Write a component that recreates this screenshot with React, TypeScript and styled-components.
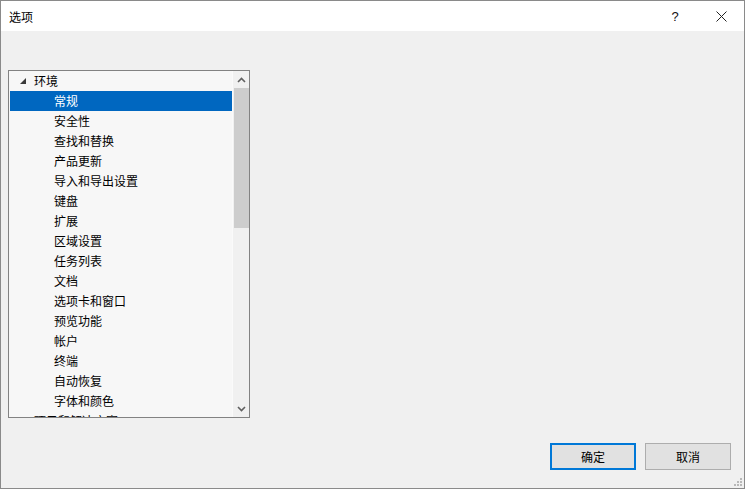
import React from "react";
import styled, { createGlobalStyle } from "styled-components";

const Global = createGlobalStyle`
  html, body { margin: 0; padding: 0; }
  body {
    font-family: "Noto Sans CJK SC", "Microsoft YaHei", sans-serif;
    font-size: 12px;
    background: #ffffff;
  }
  * { box-sizing: border-box; }
`;

const Window = styled.div`
  width: 745px;
  height: 489px;
  border: 1px solid #8a8a8a;
  display: flex;
  flex-direction: column;
  background: #f0f0f0;
  color: #000;
`;

const TitleBar = styled.div`
  height: 30px;
  background: #ffffff;
  display: flex;
  align-items: center;
  padding-left: 8px;
  flex: none;
`;

const Title = styled.div`
  flex: 1;
  font-size: 12px;
  line-height: 14px;
  margin-top: 1px;
`;

const CaptionButton = styled.div`
  width: 46px;
  height: 30px;
  display: flex;
  align-items: center;
  justify-content: center;
  color: #111;
  font-family: "Liberation Sans", Arial, sans-serif;
  font-size: 13px;
`;

const Body = styled.div`
  flex: 1;
  display: flex;
  flex-direction: column;
  padding: 39px 13px 18px 7px;
`;

const Tree = styled.div`
  width: 242px;
  height: 348px;
  border: 1px solid #828282;
  background: #f7f7f7;
  display: flex;
  overflow: hidden;
`;

const List = styled.div`
  flex: 1;
  overflow: hidden;
  padding-left: 1px;
`;

const Row = styled.div<{ $selected?: boolean; $level: number }>`
  height: 20px;
  display: flex;
  align-items: center;
  padding-left: ${(p) => (p.$level === 0 ? 10 : 44)}px;
  background: ${(p) => (p.$selected ? "#0067c0" : "transparent")};
  color: ${(p) => (p.$selected ? "#ffffff" : "#000000")};
  white-space: nowrap;
  line-height: 14px;
`;

const Toggle = styled.span`
  width: 8px;
  height: 20px;
  display: inline-flex;
  align-items: center;
  justify-content: flex-start;
  margin-right: 6px;
`;

const ScrollBar = styled.div`
  width: 17px;
  flex: none;
  background: #f0f0f0;
  border-left: 1px solid #fafafa;
  display: flex;
  flex-direction: column;
  align-items: center;
`;

const ScrollArrow = styled.div`
  height: 17px;
  width: 100%;
  display: flex;
  align-items: center;
  justify-content: center;
  flex: none;
`;

const Thumb = styled.div`
  width: 15px;
  height: 140px;
  background: #cdcdcd;
  flex: none;
`;

const Spacer = styled.div`
  flex: 1;
`;

const Footer = styled.div`
  margin-top: auto;
  display: flex;
  justify-content: flex-end;
  gap: 9px;
  position: relative;
`;

const Button = styled.div<{ $default?: boolean }>`
  width: 86px;
  height: 27px;
  background: #e1e1e1;
  border: ${(p) => (p.$default ? "2px solid #0078d7" : "1px solid #adadad")};
  display: flex;
  align-items: center;
  justify-content: center;
  font-size: 12px;
`;

const Grip = styled.svg`
  position: absolute;
  right: -11px;
  bottom: -16px;
`;

const items: { label: string; level: number; selected?: boolean; expanded?: boolean }[] = [
  { label: "环境", level: 0, expanded: true },
  { label: "常规", level: 1, selected: true },
  { label: "安全性", level: 1 },
  { label: "查找和替换", level: 1 },
  { label: "产品更新", level: 1 },
  { label: "导入和导出设置", level: 1 },
  { label: "键盘", level: 1 },
  { label: "扩展", level: 1 },
  { label: "区域设置", level: 1 },
  { label: "任务列表", level: 1 },
  { label: "文档", level: 1 },
  { label: "选项卡和窗口", level: 1 },
  { label: "预览功能", level: 1 },
  { label: "帐户", level: 1 },
  { label: "终端", level: 1 },
  { label: "自动恢复", level: 1 },
  { label: "字体和颜色", level: 1 },
  { label: "项目和解决方案", level: 0, expanded: false },
];

function Chevron({ up }: { up?: boolean }) {
  return (
    <svg width="9" height="6" viewBox="0 0 9 6">
      <path
        d={up ? "M1 5 L4.5 1.5 L8 5" : "M1 1 L4.5 4.5 L8 1"}
        fill="none"
        stroke="#606060"
        strokeWidth="1.6"
      />
    </svg>
  );
}

export default function App() {
  return (
    <>
      <Global />
      <Window>
        <TitleBar>
          <Title>选项</Title>
          <CaptionButton>?</CaptionButton>
          <CaptionButton>
            <svg width="11" height="11" viewBox="0 0 11 11">
              <path d="M0.5 0.5 L10.5 10.5 M10.5 0.5 L0.5 10.5" stroke="#222" strokeWidth="1" />
            </svg>
          </CaptionButton>
        </TitleBar>
        <Body>
          <Tree>
            <List>
              {items.map((it) => (
                <Row key={it.label} $level={it.level} $selected={it.selected}>
                  {it.level === 0 && (
                    <Toggle>
                      {it.expanded ? (
                        <svg width="6" height="6" viewBox="0 0 6 6">
                          <polygon points="6,0 6,6 0,6" fill="#3a3a3a" />
                        </svg>
                      ) : (
                        <svg width="5" height="8" viewBox="0 0 5 8">
                          <polygon points="0.5,0.5 4.5,4 0.5,7.5" fill="none" stroke="#555" />
                        </svg>
                      )}
                    </Toggle>
                  )}
                  {it.label}
                </Row>
              ))}
            </List>
            <ScrollBar>
              <ScrollArrow>
                <Chevron up />
              </ScrollArrow>
              <Thumb />
              <Spacer />
              <ScrollArrow>
                <Chevron />
              </ScrollArrow>
            </ScrollBar>
          </Tree>
          <Footer>
            <Button $default>确定</Button>
            <Button>取消</Button>
            <Grip width="9" height="9" viewBox="0 0 9 9">
              {[
                [7, 1],
                [4, 4],
                [7, 4],
                [1, 7],
                [4, 7],
                [7, 7],
              ].map(([x, y]) => (
                <rect key={`${x}-${y}`} x={x} y={y} width="2" height="2" fill="#b8b8b8" />
              ))}
            </Grip>
          </Footer>
        </Body>
      </Window>
    </>
  );
}
